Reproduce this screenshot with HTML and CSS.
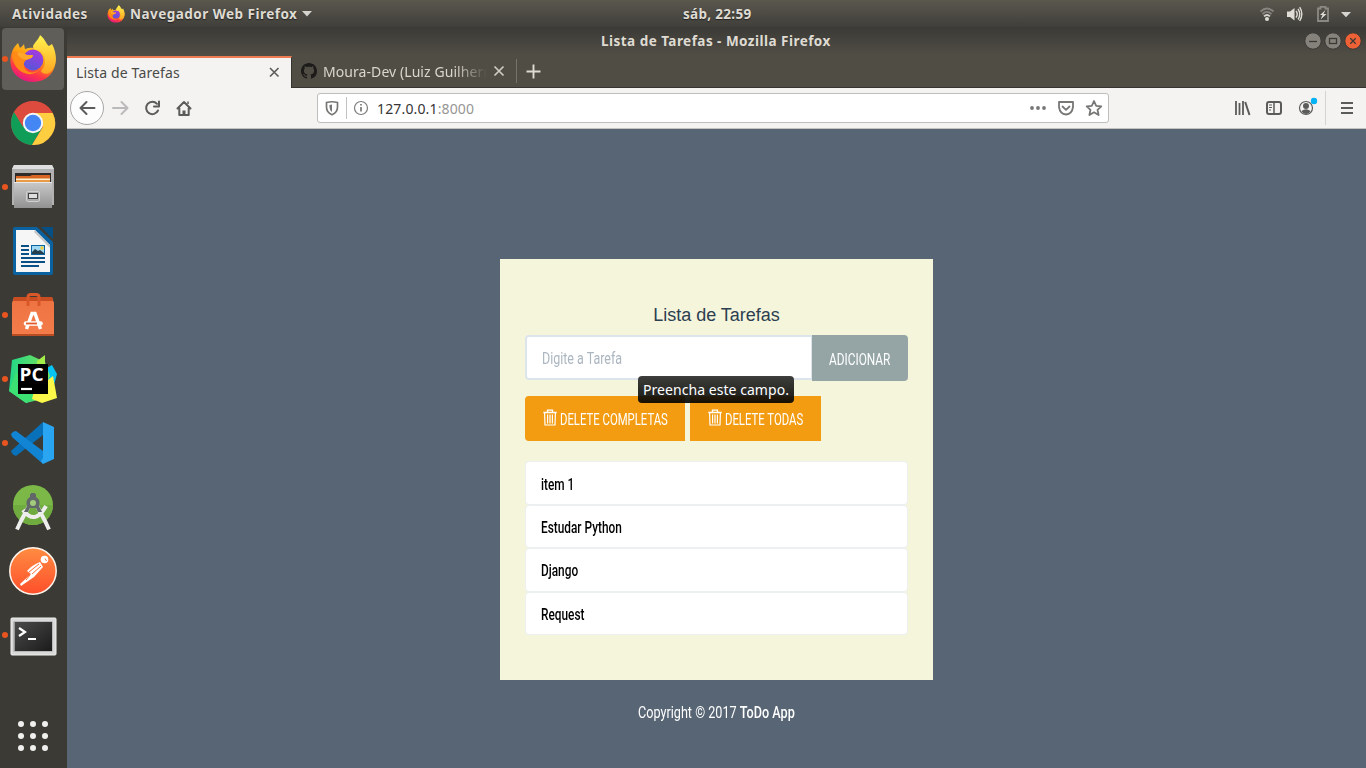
FILE: index.html
```html
<!DOCTYPE html>
<html lang="pt-BR">
<head>
<meta charset="utf-8">
<title>Lista de Tarefas</title>
<link rel="stylesheet" href="styles.css">
</head>
<body>
<svg width="0" height="0" class="defs" aria-hidden="true">
  <defs>
    <linearGradient id="fx-body" x1=".8" y1="0" x2=".3" y2="1"><stop offset="0" stop-color="#ffe63c"/><stop offset=".45" stop-color="#ff980e"/><stop offset=".75" stop-color="#ff3647"/><stop offset="1" stop-color="#e31587"/></linearGradient>
    <linearGradient id="fx-globe" x1=".7" y1="0" x2=".3" y2="1"><stop offset="0" stop-color="#a738e0"/><stop offset="1" stop-color="#5358d8"/></linearGradient>
    <linearGradient id="fx-tail" x1="0" y1="0" x2="0" y2="1"><stop offset="0" stop-color="#fff44f"/><stop offset="1" stop-color="#ffa521"/></linearGradient>
    <linearGradient id="metal" x1="0" y1="0" x2="0" y2="1"><stop offset="0" stop-color="#c9c9c9"/><stop offset="1" stop-color="#929292"/></linearGradient>
    <linearGradient id="bag" x1="0" y1="0" x2="0" y2="1"><stop offset="0" stop-color="#ed7442"/><stop offset="1" stop-color="#f47c4a"/></linearGradient>
    <linearGradient id="post" x1="0" y1="0" x2="0" y2="1"><stop offset="0" stop-color="#ff8c42"/><stop offset="1" stop-color="#ff4f2b"/></linearGradient>
    <linearGradient id="term" x1="0" y1="0" x2="1" y2="1"><stop offset="0" stop-color="#4a4a4a"/><stop offset="1" stop-color="#1b1b1b"/></linearGradient>
    <linearGradient id="pcg" x1="0" y1="0" x2="1" y2="0"><stop offset="0" stop-color="#21d789"/><stop offset="1" stop-color="#7ae25a"/></linearGradient>
    <symbol id="firefox" viewBox="0 0 48 48">
      <path fill="url(#fx-body)" d="M3 17 C4 13 7 10 9 8 L11 13 C12 12 14 11 15 9 L16 14 C21 12 28 12 33 16 L39 14 L45 17 C48 24 47 34 41 40 C33 49 16 49 8 41 C1 35 0 25 3 17Z"/>
      <circle cx="24" cy="25" r="10.400" fill="url(#fx-globe)"/>
      <path fill="#ff8a16" d="M3 20 C5 15 12 17 18 20 L24 20 C24 23 20 24 17 25 C14 28 14 31 17 35 C20 38 25 38 29 36 C20 44 4 36 3 20Z"/>
      <path fill="#ffa62b" d="M8 18C12 16 16 19 18 20L24 20C24 23 20 24 17 25C14 24 10 23 8 18Z"/>
      <path fill="url(#fx-tail)" d="M31 0 C37 5 37 9 40 11 L43 9 C49 20 48 32 40 38 C36 40 33 38 32 36 C38 30 37 21 31 16 C26 15 24 14 24 11 C26 7 30 4 31 0Z"/>
    </symbol>
    <symbol id="trash" viewBox="0 0 14 17">
      <g fill="none" stroke="currentColor"><path d="M.3 3.500H13.700M4.500 3V1.200H9.500V3" stroke-width="1.300"/><path d="M1.600 4L2 16H12L12.400 4M4.600 5.500V14.500M7 5.500V14.500M9.400 5.500V14.500" stroke-width="1.200"/></g>
    </symbol>
  </defs>
</svg>

<header class="topbar">
  <div class="top-left">
    <span class="top-text act">Atividades</span>
    <svg class="fx-small" width="18" height="18"><use href="#firefox"/></svg>
    <span class="top-text app">Navegador Web Firefox</span>
    <svg width="10" height="6"><path d="M0 0H10L5 5.5Z" fill="#d6d4ce"/></svg>
  </div>
  <span class="top-text clock">sáb, 22:59</span>
  <svg class="tray" width="100" height="26" viewBox="1260 0 100 26">
    <g fill="none" stroke="#86847e" stroke-width="1.8"><path d="M1260.5 10.5Q1267 4.5 1273.5 10.5"/><path d="M1262.5 13Q1267 8.8 1271.500 13"/></g>
    <path d="M1264 15.300Q1267 12.600 1270 15.300" fill="none" stroke="#d6d4ce" stroke-width="1.8"/><circle cx="1267" cy="18" r="2" fill="#dfddd6"/>
    <path d="M1287 10.500H1290L1294.500 7V19.500L1290 16H1287Z" fill="#dfddd6"/>
    <g fill="none" stroke="#dfddd6" stroke-width="1.4"><path d="M1296 10Q1298.500 13 1296 16.500"/><path d="M1298 8Q1301.500 13 1298 18.500"/><path d="M1299.700 6.200Q1304 13 1299.700 20"/></g>
    <path d="M1318 7.500H1320.500V5.800H1325.500V7.500H1328V20H1318Z" fill="none" stroke="#8b8983" stroke-width="1.8"/><path d="M1325.500 9L1320 14H1322.500L1320.500 18.500L1326.500 13H1323.500Z" fill="#dfddd6"/>
    <path d="M1341 11H1351L1346 16.200Z" fill="#d6d4ce"/>
  </svg>
</header>

<div class="desktop">
  <nav class="dock">
    <div class="slot on run"><svg width="48" height="48"><use href="#firefox"/></svg></div>
    <div class="slot"><svg width="48" height="48" viewBox="0 0 48 48">
      <circle cx="24" cy="24" r="22" fill="#dd4b3e"/><path d="M24 24L4.900 13.200A22 22 0 0 0 23 46L33 29Z" fill="#109d58"/><path d="M24 14H43.700A22 22 0 0 1 23 46L34 28Z" fill="#ffcd40"/><path d="M5 13L14 28L15 18L24 14H43.700A22 22 0 0 0 5 13Z" fill="#dd4b3e"/><circle cx="24" cy="24" r="10.200" fill="#f5f5f5"/><circle cx="24" cy="24" r="8.200" fill="#4487f4"/></svg></div>
    <div class="slot run"><svg width="48" height="48" viewBox="0 0 48 48">
      <path d="M5 2H43L45 6V42H3V6Z" fill="#b2b2b2"/><path d="M5 2H43L45 6H3Z" fill="#dedede"/><path d="M6 10H42V20H6Z" fill="#302b28"/><path d="M7 13H21L23 12H41V20H7Z" fill="#d96522"/><path d="M7 15.500H41V17H7Z" fill="#fff0d0"/><path d="M7 17H41V20H7Z" fill="#e99a46"/><path d="M5 19H43V45H5Z" fill="url(#metal)"/><path d="M5 19.500H43" stroke="#e8e8e8"/><rect x="17.500" y="28.500" width="13" height="10" rx="1.500" fill="#aaa" stroke="#d0d0d0"/><rect x="19.500" y="30.500" width="9" height="5" fill="#ddd" stroke="#444"/></svg></div>
    <div class="slot"><svg width="48" height="48" viewBox="0 0 48 48">
      <path d="M6 0H28L44 15V46Q44 48 42 48H6Q4 48 4 46V2Q4 0 6 0Z" fill="#0b62a0"/><path d="M32 0H44V12Z" fill="#064f84"/><path d="M7 3H26L41 18V45H7Z" fill="#f6f6f6"/><path d="M26 3L41 18V21L25 5Z" fill="#c6c6c6"/><g stroke="#085086" stroke-width="2"><path d="M12 19H20M12 23H20M12 27H20M12 31H36M12 35H36M12 39H30"/></g><rect x="22.500" y="18.500" width="13" height="9" fill="#9ed7f2" stroke="#0b62a0"/><circle cx="33" cy="21" r="1.700" fill="#f9cf34"/><path d="M23 27V25L26 22L29 24L31 23L35 26V27Z" fill="#263f4c"/></svg></div>
    <div class="slot run"><svg width="48" height="48" viewBox="0 0 48 48">
      <path d="M5 6H43L45 12V44H3V12Z" fill="url(#bag)"/><path d="M5 6H43L44 10H4Z" fill="#c94d21"/><path d="M3 43H45V45H3Z" fill="#b84c23"/><path d="M19 15V6Q19 3.500 22 3.500H27Q30 3.500 30 6V15" fill="none" stroke="#d9582a" stroke-width="3"/><path d="M17.500 38L23 22.500H26L31.500 38" fill="none" stroke="#fff" stroke-width="3.400"/><path d="M17 32.500H31.500" stroke="#fff" stroke-width="4.600" stroke-linecap="round"/><path d="M17 32.500H28" stroke="#e35b2b" stroke-width="1.800"/></svg></div>
    <div class="slot run"><svg width="50" height="50" viewBox="0 0 50 50">
      <path d="M35 16L44 11L49 20L44 38L30 34Z" fill="#07c3f2"/><path d="M4 6L22 1L37 8L42 22L30 46L18 49L1 37Z" fill="url(#pcg)"/><path d="M1 37L8 18L30 44L18 49Z" fill="#3ce073"/><path d="M29 7L37 1V10L38 16H29Z" fill="#a4ec4a"/><path d="M26 37L45 22L49 44L34 49L24 45Z" fill="#fcf84a"/><rect x="10" y="10" width="30" height="30" fill="#000"/><path d="M13 35H24" stroke="#fff" stroke-width="2.200"/><text x="11.600" y="27" class="pc" textLength="24" lengthAdjust="spacingAndGlyphs">PC</text></svg></div>
    <div class="slot run"><svg width="48" height="48" viewBox="0 0 48 48">
      <path d="M34 3L2 32Q3 36 7 37L34 16Z" fill="#0871ba"/><path d="M2 15Q4 12 7 12L34 32V45L3 18Z" fill="#1284d4"/><path d="M34 3L45 8V40L34 45L32 42L34 39Z" fill="#2aa5f1"/></svg></div>
    <div class="slot"><svg width="48" height="48" viewBox="0 0 48 48">
      <circle cx="24" cy="22" r="20" fill="#7cb847"/><path d="M24 22H44A20 20 0 0 1 4 22Z" fill="#6fab3f"/><path d="M14 27Q26 43 37 23" fill="none" stroke="#ededed" stroke-width="4"/><path d="M20 23L12 38L8 46.500M28 23L36 38L40 46.500" fill="none" stroke="#ededed" stroke-width="4"/><path d="M21 11H22V10H26V11H27V14Q32 17 30 23L33 29H29L27 25H21L19 29H15L18 23Q16 17 21 14Z" fill="#626769"/><circle cx="24" cy="20" r="3" fill="#a2cc7c"/></svg></div>
    <div class="slot"><svg width="48" height="48" viewBox="0 0 48 48">
      <circle cx="24" cy="24" r="23.200" fill="url(#post)" stroke="#fff5ed" stroke-width="1.500"/><circle cx="35.500" cy="12.500" r="3.800" fill="#fff"/><path d="M36 11.500L37.500 14" stroke="#ff753b"/><path d="M31 15Q23 18 18 24L22 27L11 37L12 39L25 30L34 20Z" fill="#fff"/><path d="M30 17L20 25M32 19L23 27M17 33L21 28" stroke="#ff7039" stroke-width="1"/></svg></div>
    <div class="slot run"><svg class="terminal" width="48" height="48" viewBox="0 0 48 48">
      <rect x="2" y="5" width="45" height="37" rx="1" fill="#d9d9d9" stroke="#efefef"/><rect x="4.500" y="8.500" width="39" height="30" fill="#999"/><rect x="6" y="9" width="37" height="29" fill="url(#term)"/><path d="M10 15L16 19L10 23M19 26H27" fill="none" stroke="#fff" stroke-width="2.200"/></svg></div>
    <div class="apps"><i></i><i></i><i></i><i></i><i></i><i></i><i></i><i></i><i></i></div>
  </nav>

  <main class="window">
    <div class="titlebar">
      <span class="wtitle">Lista de Tarefas - Mozilla Firefox</span>
      <div class="wbtns">
        <svg width="18" height="18"><circle cx="9" cy="9" r="8.200" class="wb"/><path d="M5 9.500H13" class="wg"/></svg>
        <svg width="18" height="18"><circle cx="9" cy="9" r="8.200" class="wb"/><rect x="5.500" y="6.500" width="7" height="5" class="wg"/></svg>
        <svg width="18" height="18"><circle cx="9" cy="9" r="8.200" class="wb close"/><path d="M6.300 6.300L11.700 11.700M11.700 6.300L6.300 11.700" class="wg"/></svg>
      </div>
    </div>
    <div class="tabs">
      <div class="tab active"><span class="t1">Lista de Tarefas</span><svg width="12" height="12"><path d="M2 2L10.500 10.500M10.500 2L2 10.500" stroke="#5b5b59" stroke-width="1.600"/></svg></div>
      <div class="tab second">
        <svg width="16" height="16" viewBox="0 0 16 16"><path fill="#1c1b19" d="M8 0C3.580 0 0 3.580 0 8c0 3.540 2.290 6.530 5.470 7.590.4.070.55-.17.55-.38 0-.19-.01-.82-.01-1.490-2.010.37-2.530-.49-2.690-.94-.09-.23-.48-.94-.82-1.130-.28-.15-.68-.52-.01-.53.63-.01 1.080.58 1.230.82.72 1.210 1.870.87 2.330.66.07-.52.28-.87.51-1.070-1.780-.2-3.640-.89-3.640-3.950 0-.87.31-1.590.82-2.150-.08-.2-.36-1.020.08-2.120 0 0 .67-.21 2.200.82.64-.18 1.320-.27 2-.27s1.360.09 2 .27c1.530-1.040 2.200-.82 2.200-.82.44 1.100.16 1.920.08 2.120.51.56.82 1.270.82 2.150 0 3.070-1.870 3.750-3.650 3.950.29.25.54.73.54 1.480 0 1.070-.01 1.930-.01 2.200 0 .21.15.46.55.38A8 8 0 0 0 16 8c0-4.420-3.580-8-8-8z"/></svg>
        <span class="t2">Moura-Dev (Luiz Guilherm</span>
        <svg width="12" height="12"><path d="M1.500 1.500L10.500 10.500M10.500 1.500L1.500 10.500" stroke="#cfccc4" stroke-width="1.700"/></svg>
      </div>
      <svg class="plus" width="15" height="15"><path d="M7.500 .5V14.500M.5 7.500H14.500" stroke="#dedbd3" stroke-width="1.900"/></svg>
    </div>
    <div class="toolbar">
      <svg class="nav" width="134" height="40" viewBox="67 88 134 40">
        <circle cx="87" cy="108" r="16.500" fill="#fdfdfd" stroke="#a8a7a5"/>
        <g fill="none" stroke="#5b5b59" stroke-width="2" stroke-linecap="round" stroke-linejoin="round"><path d="M80.500 108H94.500M86.500 102L80.500 108L86.500 114"/><path d="M113 108H127M121.500 102L127.500 108L121.500 114" stroke="#bababa"/><path d="M158 110.500A6.200 6.200 0 1 1 157 103.800M159 101.500V106.500H154"/><path d="M177.500 108.500L184 102L190.500 108.500M179.300 108V115H188.700V108"/></g><path d="M182.500 115V110.500H185.500V115" fill="#5b5b59"/><path d="M188 101.500V104" stroke="#5b5b59" stroke-width="1.500"/>
      </svg>
      <div class="url">
        <svg width="54" height="29" viewBox="318 94 54 29"><path d="M326.500 102.500Q332 101 337.500 102.500V107Q337.500 112.500 332 114.700Q326.500 112.500 326.500 107Z" fill="none" stroke="#777775" stroke-width="1.700"/><path d="M332 104.500V112Q329.500 110.500 329.500 107V105Z" fill="#777775"/><path d="M346.500 97V119" stroke="#c2c2c2"/><circle cx="361" cy="108" r="6.500" fill="none" stroke="#7d7d7b" stroke-width="1.200"/><path d="M361 107V111.500M361 104V105.500" stroke="#777775" stroke-width="1.700"/></svg>
        <span class="addr">127.0.0.1<span>:8000</span></span>
        <svg class="urlicons" width="76" height="29" viewBox="1028 94 76 29"><g fill="#777775"><circle cx="1032" cy="108" r="1.900"/><circle cx="1038" cy="108" r="1.900"/><circle cx="1044" cy="108" r="1.900"/></g><g fill="none" stroke="#777775" stroke-width="1.800" stroke-linejoin="round" stroke-linecap="round"><path d="M1059 102H1073V107Q1072 114 1066 114.500Q1060 114 1059 107ZM1062.500 106.500L1066 109.800L1069.500 106.500"/><path d="M1094 101L1096.200 105.800L1101.300 106.300L1097.500 109.800L1098.600 115L1094 112.300L1089.400 115L1090.500 109.800L1086.700 106.300L1091.800 105.800Z"/></g></svg>
      </div>
      <svg class="tools" width="136" height="40" viewBox="1230 88 136 40"><g stroke="#5b5b59" fill="none" stroke-width="2"><path d="M1236 101V115M1239.500 103V115M1243 101V115" stroke-width="1.800"/><path d="M1245.200 102L1249.500 115"/><rect x="1267" y="102" width="14" height="12" rx="2"/><path d="M1274 102V114" stroke-width="1.500"/><path d="M1269 105H1272M1269 107.500H1272M1269 110H1271" stroke-width="1"/><circle cx="1306" cy="108" r="6.500" stroke-width="1.200"/></g><circle cx="1306" cy="106" r="3" fill="#5b5b59"/><path d="M1301.500 111Q1306 107.500 1310.500 111Q1309 114 1306 114Q1303 114 1301.500 111Z" fill="#5b5b59"/><circle cx="1314" cy="101" r="3.200" fill="#00b3f4"/><path d="M1325.500 91V125" stroke="#d5d3d1"/><path d="M1341 103H1353M1341 108H1353M1341 113H1353" stroke="#5b5b59" stroke-width="2"/></svg>
    </div>
    <section class="page">
      <div class="card">
        <h1>Lista de Tarefas</h1>
        <form class="entry">
          <div class="field"><span class="os os-ph">Digite a Tarefa</span></div>
          <div class="btn add"><span class="os os-add">ADICIONAR</span></div>
          <div class="tip"><span>Preencha este campo.</span></div>
        </form>
        <div class="actions">
          <div class="btn warn first"><svg width="14" height="17"><use href="#trash"/></svg><span class="os os-del">DELETE COMPLETAS</span></div>
          <div class="btn warn"><svg width="14" height="17"><use href="#trash"/></svg><span class="os os-del">DELETE TODAS</span></div>
        </div>
        <ul class="list">
          <li><span class="os">item 1</span></li>
          <li><span class="os">Estudar Python</span></li>
          <li><span class="os">Django</span></li>
          <li><span class="os">Request</span></li>
        </ul>
      </div>
      <footer><span class="os os-foot">Copyright © 2017 <b>ToDo App</b></span></footer>
    </section>
  </main>
</div>
</body>
</html>
```
FILE: styles.css
```css
* { box-sizing: border-box; }
body { margin: 0; width: 1366px; height: 768px; overflow: hidden; background: #3b3a34; font-family: "Noto Sans", "Open Sans", sans-serif; font-size: 14px; }
svg { display: block; flex: none; }
span { white-space: nowrap; }
.defs { position: absolute; }

.topbar { height: 27px; display: grid; grid-template-columns: 1fr auto 1fr; align-items: center; background: linear-gradient(#5a574e, #403f3a); }
.top-left { display: flex; align-items: center; padding-left: 12px; }
.top-text { font-weight: 700; font-size: 13.500px; line-height: 26px; letter-spacing: .48px; color: #dfdbd2; text-shadow: 0 1px 1px #222; }
.act { width: 95px; }
.fx-small { margin-right: 5px; }
.app { width: 172px; }
.clock { width: 68px; margin-left: 68px; letter-spacing: .3px; }
.tray { justify-self: end; margin-right: 6px; }

.desktop { display: flex; height: 741px; }
.dock { width: 67px; background: #3b3a34; display: flex; flex-direction: column; }
.slot { height: 64px; width: 67px; display: flex; align-items: center; justify-content: center; padding-right: 1px; position: relative; }
.slot.on::before { content: ""; position: absolute; left: 2px; top: 1px; width: 62px; height: 62px; border-radius: 4px; background: #5f5e59; }
.slot svg { position: relative; }
.slot .terminal { margin-top: 4px; }
.slot.run::after { content: ""; position: absolute; left: 2px; top: 29px; width: 6px; height: 6px; border-radius: 50%; background: #e95420; }
.pc { font: 700 18px "Open Sans", sans-serif; fill: #fff; }
.apps { display: grid; grid-template-columns: repeat(3, 6px); gap: 6px; margin: auto 0 17px 18px; }
.apps i { width: 6px; height: 6px; border-radius: 50%; background: #f0f0ee; }

.window { width: 1299px; display: flex; flex-direction: column; background: #504d45; }
.titlebar { height: 28px; display: grid; grid-template-columns: 1fr auto 1fr; align-items: center; background: linear-gradient(#3b3a36, #504d45); }
.wtitle { grid-column: 2; font-weight: 700; font-size: 13.500px; letter-spacing: .47px; color: #dfdbd2; width: 231px; }
.wbtns { display: flex; gap: 2px; justify-self: end; margin-right: 4px; }
.wb { fill: #85827b; stroke: #3a3935; }
.wb.close { fill: #ee6136; }
.wg { fill: none; stroke: #3b3a34; stroke-width: 1.300; }
.tabs { height: 33px; display: flex; align-items: center; border-bottom: 1px solid #35342f; }
.tab { display: flex; align-items: center; }
.tab.active { width: 225px; height: 32px; align-self: flex-end; margin-bottom: -1px; padding: 0 11px 2px 9px; justify-content: space-between; background: #f4f3f1; border-top: 2px solid #ee7b52; border-right: 1px solid #35342f; color: #4a4a48; letter-spacing: .14px; }
.tab.second { width: 225px; height: 24px; padding: 0 11px 0 9px; gap: 6px; border-right: 1px solid #77736a; color: #dad6cd; }
.t2 { width: 164px; overflow: hidden; letter-spacing: .07px; -webkit-mask-image: linear-gradient(90deg, #000 80%, transparent); mask-image: linear-gradient(90deg, #000 80%, transparent); }
.plus { margin-left: 9px; }
.toolbar { height: 41px; display: flex; align-items: flex-start; background: #f4f3f1; border-bottom: 1px solid #c5c2bf; }
.url { width: 792px; height: 30px; margin: 5px 0 0 116px; display: flex; align-items: center; background: #fff; border: 1px solid #bebebc; border-radius: 3px; }
.addr { margin-left: 5px; color: #363636; letter-spacing: .15px; }
.addr span { color: #969694; }
.urlicons { margin-left: auto; margin-right: 4px; }
.tools { margin-left: auto; }

.page { flex: 1; background: #576574; display: flex; flex-direction: column; align-items: center; }
.card { width: 433px; height: 421px; margin-top: 130px; padding: 46px 25px 0; background: #f5f5dc; }
h1 { margin: 0 0 10px; text-align: center; font: 400 18px/20px "Liberation Sans", Arial, sans-serif; color: #2c3e50; }
.entry { display: flex; height: 46px; position: relative; margin: 0; }
.field { width: 287px; height: 45px; border: 2px solid #dce4ec; border-right-width: 1px; border-radius: 4px 0 0 4px; background: #fff; padding: 3px 0 0 15px; display: flex; align-items: center; color: #acb6c0; }
.btn { display: flex; align-items: center; color: #fff; }
.add { width: 96px; height: 46px; padding: 3px 0 0 17px; background: #95a5a6; border-radius: 0 4px 4px 0; }
.tip { position: absolute; left: 113px; top: 41px; width: 156px; height: 27px; border-radius: 4px; background: linear-gradient(rgba(48,48,46,.93), rgba(0,0,0,.9)); color: #fff; padding-left: 5px; line-height: 27px; z-index: 2; letter-spacing: .05px; }
.actions { display: flex; gap: 5px; margin-top: 15px; }
.warn { width: 131px; height: 45px; padding: 2px 0 0 18px; gap: 3px; background: #f39c12; }
.warn.first { width: 160px; border-radius: 4px 0 0 4px; }
.warn svg { margin-bottom: 4px; }
.list { list-style: none; margin: 20.400px 0 0; padding: 0; }
.list li { height: 43.400px; display: flex; align-items: center; padding: 3px 0 0 15px; background: #fff; border: 1px solid #ecf0f1; border-radius: 4px; color: #000; }

/* condensed lettering */
.os { font-family: Roboto, sans-serif; font-size: 16px; line-height: 20px; transform-origin: 0 50%; transform: scaleX(.74); }
.os-ph { transform: scaleX(.78); }
.os-del { transform: scaleX(.708); }
.os-foot { transform: scaleX(.79); }
.list .os { font-weight: 500; }
footer { margin-top: 23px; width: 157px; color: #fff; display: flex; }
footer b { font-weight: 500; }
```
